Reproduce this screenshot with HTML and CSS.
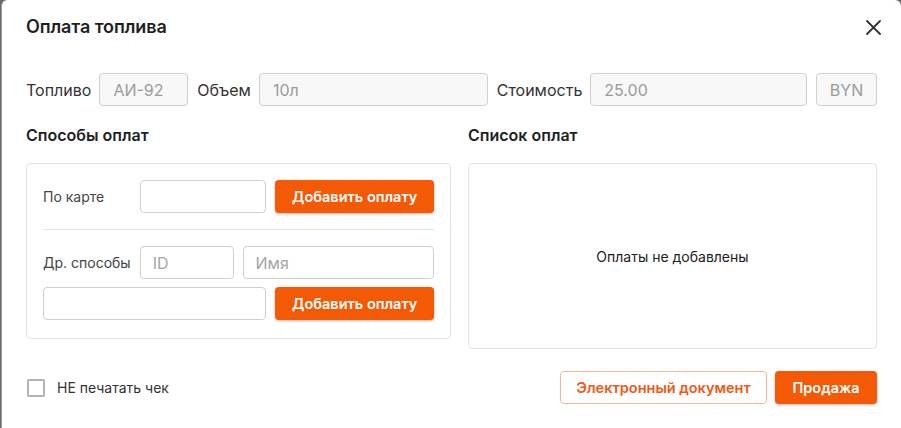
FILE: index.html
```html
<!DOCTYPE html>
<html lang="ru">
<head>
<meta charset="utf-8">
<link rel="stylesheet" href="styles.css">
</head>
<body>
<div class="modal">
  <div class="header">
    <h1 class="title">Оплата топлива</h1>
    <button class="close" aria-label="close">
      <svg width="15" height="15" viewBox="0 0 15 15"><path d="M1 1 L14 14 M14 1 L1 14" stroke="#333" stroke-width="1.8" stroke-linecap="round"/></svg>
    </button>
  </div>
  <div class="fuel-row">
    <span class="lbl">Топливо</span>
    <div class="field f-fuel">АИ-92</div>
    <span class="lbl">Объем</span>
    <div class="field f-vol">10л</div>
    <span class="lbl">Стоимость</span>
    <div class="field f-cost">25.00</div>
    <div class="field f-cur">BYN</div>
  </div>
  <div class="columns">
    <div class="col col-left">
      <h2 class="section">Способы оплат</h2>
      <div class="card methods">
        <div class="mrow">
          <span class="mlabel">По карте</span>
          <div class="input w-card"></div>
          <button class="btn primary w-btn">Добавить оплату</button>
        </div>
        <div class="divider"></div>
        <div class="mrow">
          <span class="mlabel">Др. способы</span>
          <div class="input w-id ph">ID</div>
          <div class="input w-name ph">Имя</div>
        </div>
        <div class="mrow row3">
          <div class="input w-wide"></div>
          <button class="btn primary w-btn">Добавить оплату</button>
        </div>
      </div>
    </div>
    <div class="col col-right">
      <h2 class="section">Список оплат</h2>
      <div class="card list">
        <span class="empty">Оплаты не добавлены</span>
      </div>
    </div>
  </div>
  <div class="footer">
    <label class="check"><span class="box"></span><span>НЕ печатать чек</span></label>
    <div class="actions">
      <button class="btn outline">Электронный документ</button>
      <button class="btn primary sale">Продажа</button>
    </div>
  </div>
</div>
</body>
</html>
```

FILE: styles.css
```css
* { box-sizing: border-box; }
html, body { margin: 0; padding: 0; }
body {
  width: 901px;
  height: 428px;
  overflow: hidden;
  background: #6b6b6b;
  font-family: Inter, "Noto Sans", sans-serif;
  color: #222;
}
.modal {
  margin-left: 1px;
  width: 900px;
  height: 440px;
  background: #fff;
  border-radius: 6px 6px 0 0;
  border-left: 1px solid #9a9a9a;
  padding: 0 24px 0 24px;
}
.header {
  display: flex;
  align-items: center;
  justify-content: space-between;
  height: 53px;
}
.title {
  margin: 0;
  font-size: 18px;
  font-weight: 600;
  color: #1f1f1f;
  letter-spacing: -0.1px;
}
.close {
  border: 0;
  background: none;
  padding: 0;
  width: 15px;
  height: 15px;
  margin-right: -4px;
  margin-top: 2px;
  display: flex;
}
.fuel-row {
  display: flex;
  align-items: center;
  margin-top: 20px;
  height: 33px;
}
.lbl {
  font-size: 16px;
  color: #333;
  margin-right: 8px;
  white-space: nowrap;
}
.field {
  height: 33px;
  border: 1px solid #cfcfcf;
  border-radius: 4px;
  background: #f8f8f8;
  color: #9b9b9b;
  font-size: 16px;
  display: flex;
  align-items: center;
  padding-left: 13px;
  margin-right: 9px;
}
.f-fuel { width: 89px; }
.f-vol { width: 229px; }
.f-cost { width: 217px; }
.f-cur { width: 61px; margin-right: 0; justify-content: center; padding-left: 0; }
.columns {
  display: flex;
  gap: 17px;
  margin-top: 18px;
}
.col-left { width: 425px; }
.col-right { width: 409px; }
.section {
  margin: 0;
  font-size: 16px;
  font-weight: 600;
  color: #1f1f1f;
  height: 22px;
  line-height: 22px;
}
.card {
  margin-top: 17px;
  border: 1px solid #e4e4e4;
  border-radius: 4px;
}
.methods {
  height: 176px;
  padding: 16px 16px 0 16px;
}
.mrow {
  display: flex;
  align-items: center;
  gap: 9px;
}
.mlabel {
  width: 88px;
  font-size: 14px;
  color: #444;
  white-space: nowrap;
}
.input {
  height: 33px;
  border: 1px solid #cfcfcf;
  border-radius: 4px;
  background: #fff;
  font-size: 16px;
  color: #a5a5a5;
  display: flex;
  align-items: center;
  padding-left: 12px;
}
.w-card { width: 127px; }
.w-id { width: 94px; }
.w-name { width: 192px; }
.w-wide { width: 224px; }
.divider {
  height: 1px;
  background: #e4e4e4;
  margin: 16px 0 16px 0;
}
.row3 { margin-top: 8px; }
.btn {
  font-family: Inter, "Noto Sans", sans-serif;
  font-size: 14.5px;
  font-weight: 600;
  height: 33px;
  border-radius: 4px;
  cursor: pointer;
  padding: 0 4px;
  white-space: nowrap;
}
.primary {
  background: #f45a06;
  color: #fff;
  border: 0;
  box-shadow: 0 1px 3px rgba(0,0,0,0.28);
}
.w-btn { width: 159px; }
.list {
  height: 186px;
  display: flex;
  align-items: center;
  justify-content: center;
}
.empty {
  font-size: 14px;
  color: #222;
}
.footer {
  display: flex;
  align-items: center;
  justify-content: space-between;
  margin-top: 22px;
}
.check {
  display: flex;
  align-items: center;
  gap: 12px;
  font-size: 14px;
  color: #333;
}
.box {
  width: 18px;
  height: 18px;
  border: 2px solid #b3b3b3;
  border-radius: 2px;
  margin-left: 1px;
}
.actions {
  display: flex;
  gap: 8px;
}
.outline {
  background: #fff;
  color: #ee5a16;
  border: 1px solid #f6b596;
  width: 207px;
}
.sale { width: 102px; }
```
